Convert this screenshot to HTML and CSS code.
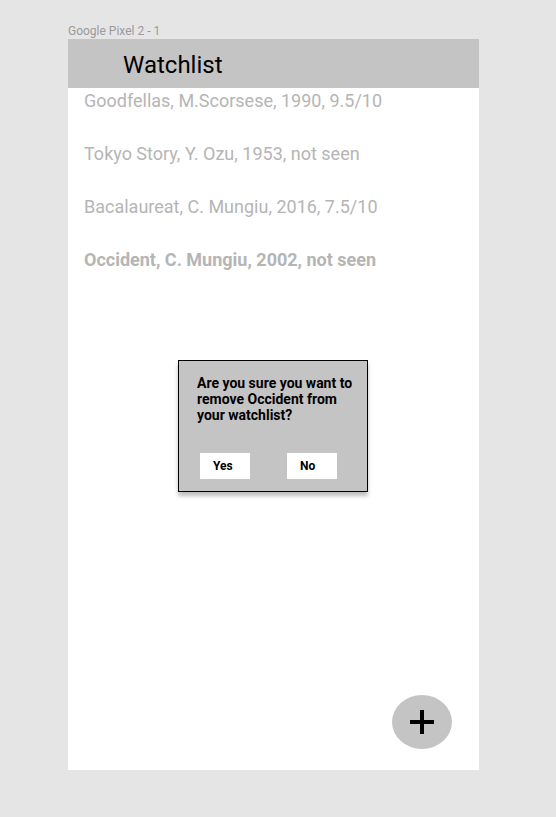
FILE: index.html
```html
<!DOCTYPE html>
<html>
<head>
<meta charset="utf-8">
<link rel="stylesheet" href="styles.css">
</head>
<body>
<div class="label">Google Pixel 2 - 1</div>
<div class="frame">
  <div class="header">Watchlist</div>
  <ul class="list">
    <li>Goodfellas, M.Scorsese, 1990, 9.5/10</li>
    <li>Tokyo Story, Y. Ozu, 1953, not seen</li>
    <li>Bacalaureat, C. Mungiu, 2016, 7.5/10</li>
    <li class="selected">Occident, C. Mungiu, 2002, not seen</li>
  </ul>
  <div class="dialog">
    <p class="dialog-text">Are you sure you want to remove Occident from your watchlist?</p>
    <div class="dialog-buttons">
      <button class="btn">Yes</button>
      <button class="btn">No</button>
    </div>
  </div>
  <button class="fab" aria-label="Add">
    <svg width="26" height="26" viewBox="0 0 26 26"><path d="M13 1V25M1 13H25" stroke="#000" stroke-width="4" fill="none"/></svg>
  </button>
</div>
</body>
</html>
```

FILE: styles.css
```css
html, body {
  margin: 0;
  padding: 0;
  background: #e5e5e5;
}
body {
  padding: 24px 0 0 68px;
  font-family: Roboto, "Liberation Sans", sans-serif;
}
.label {
  font-size: 12px;
  line-height: 15px;
  color: #9a9a9a;
}
.frame {
  position: relative;
  width: 411px;
  height: 731px;
  background: #fff;
}
.header {
  height: 49px;
  background: #c4c4c4;
  display: flex;
  align-items: center;
  padding: 2px 0 0 55px;
  font-size: 24px;
  color: #000;
  box-sizing: border-box;
}
.list {
  list-style: none;
  margin: 0;
  padding: 2px 0 0 16px;
  display: flex;
  flex-direction: column;
  gap: 32px;
}
.list li {
  font-size: 18px;
  line-height: 21px;
  color: #b5b5b5;
}
.list li.selected {
  font-weight: bold;
}
.dialog {
  position: absolute;
  left: 110px;
  top: 321px;
  width: 190px;
  height: 132px;
  box-sizing: border-box;
  background: #c4c4c4;
  border: 1px solid #000;
  box-shadow: 0 4px 4px rgba(0,0,0,0.25);
  padding: 14px 10px 0 18px;
}
.dialog-text {
  margin: 0;
  font-size: 14px;
  line-height: 16px;
  font-weight: bold;
  color: #000;
}
.dialog-buttons {
  display: flex;
  gap: 37px;
  margin-top: 30px;
  padding-left: 3px;
}
.btn {
  width: 50px;
  height: 26px;
  border: none;
  background: #fff;
  font-family: Roboto, "Liberation Sans", sans-serif;
  font-size: 12px;
  font-weight: bold;
  color: #000;
  text-align: left;
  padding: 0 0 0 13px;
}
.fab {
  position: absolute;
  left: 324px;
  top: 656px;
  width: 60px;
  height: 54px;
  border-radius: 50%;
  border: none;
  background: #c4c4c4;
  display: flex;
  align-items: center;
  justify-content: center;
  padding: 0;
}
```
